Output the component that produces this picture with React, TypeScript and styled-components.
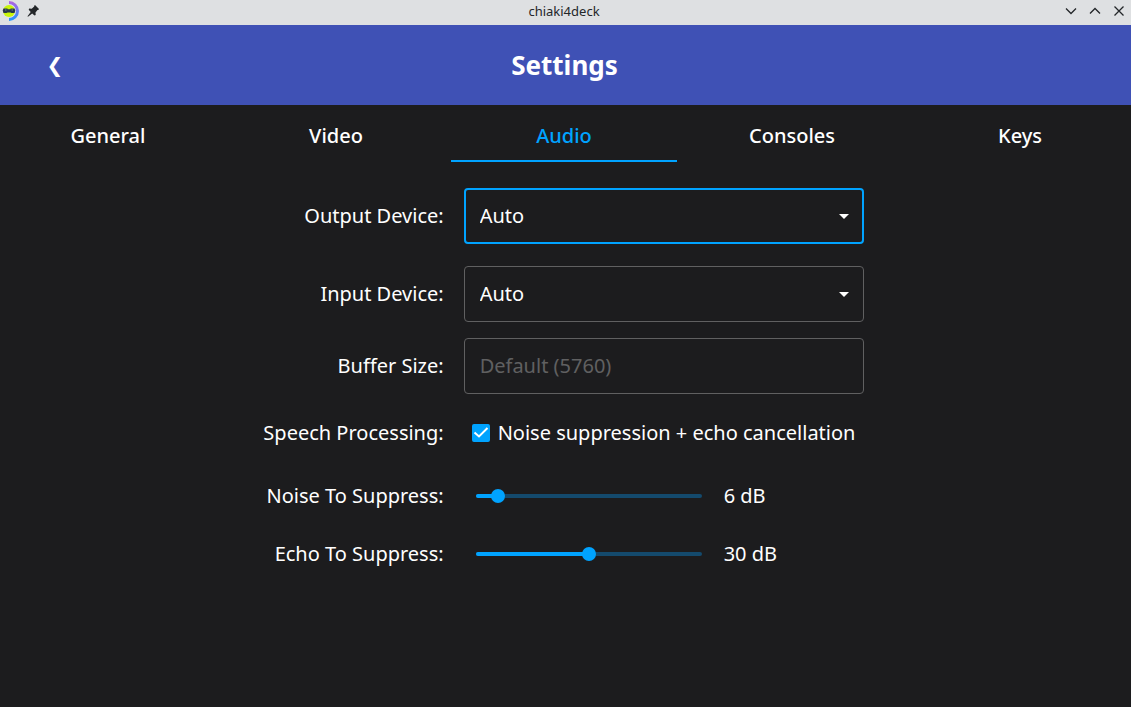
import React, { useState } from "react";
import styled, { createGlobalStyle } from "styled-components";

const accent = "#00a3ff";

const GlobalStyle = createGlobalStyle`
  * { box-sizing: border-box; }
  body {
    margin: 0;
    background: #1c1c1e;
    color: #fff;
    font-family: "Noto Sans", sans-serif;
    font-size: 20px;
    line-height: 28px;
  }
  button, input, select { font: inherit; color: inherit; margin: 0; }
`;

const Window = styled.div`
  min-height: 100vh;
  overflow: hidden;
`;

const TitleBar = styled.div`
  display: grid;
  grid-template-columns: 1fr auto 1fr;
  align-items: center;
  height: 25px;
  padding: 0 1px 3px 2px;
  background: #dee0e2;
  color: #232629;
`;

const TitleSide = styled.div<{ $end?: boolean }>`
  display: flex;
  align-items: center;
  justify-content: ${(p) => (p.$end ? "flex-end" : "flex-start")};
  gap: ${(p) => (p.$end ? "2px" : "0")};
`;

const WindowTitle = styled.span`
  font-size: 13px;
  line-height: 20px;
  padding-right: 4px;
`;

const WindowButton = styled.button`
  display: flex;
  align-items: center;
  justify-content: center;
  width: 22px;
  height: 22px;
  padding: 0;
  border: 0;
  background: none;
`;

const Header = styled.header`
  display: grid;
  grid-template-columns: 110px 1fr 112px;
  align-items: center;
  height: 80px;
  background: #3f51b5;
`;

const BackButton = styled.button`
  height: 80px;
  padding: 0;
  border: 0;
  background: none;
  font-family: "DejaVu Sans", sans-serif;
  font-size: 20px;
`;

const Heading = styled.h1`
  margin: 0;
  font-size: 26px;
  line-height: 36px;
  font-weight: 700;
  text-align: center;
`;

const Tabs = styled.nav`
  display: grid;
  grid-template-columns: repeat(5, 1fr);
  gap: 2px;
  margin: 0 -2px 0 -5px;
`;

const Tab = styled.button<{ $active: boolean }>`
  height: 57px;
  padding: 6px 0 0;
  border: 0;
  border-bottom: 2px solid ${(p) => (p.$active ? accent : "transparent")};
  background: none;
  color: ${(p) => (p.$active ? accent : "#fff")};
  font-weight: 500;
`;

const Form = styled.form`
  display: grid;
  grid-template-columns: max-content 400px;
  grid-template-rows: 68px 68px 56px 58px 48px 48px;
  gap: 10px 20px;
  align-items: center;
  justify-content: center;
  padding: 20px 4px 0 0;
`;

const Label = styled.label`
  text-align: right;
`;

const SelectBox = styled.div`
  position: relative;
  height: 56px;
`;

const Select = styled.select<{ $focused?: boolean }>`
  appearance: none;
  width: 100%;
  height: 56px;
  padding: 0 ${(p) => (p.$focused ? "14px" : "15px")};
  border: ${(p) => (p.$focused ? `2px solid ${accent}` : "1px solid #606061")};
  border-radius: 4px;
  outline: none;
  background: #1c1c1e;
`;

const Arrow = styled.svg`
  position: absolute;
  top: 26px;
  right: 15px;
  pointer-events: none;
`;

const TextField = styled.input`
  width: 100%;
  height: 56px;
  padding: 0 15px 2px;
  border: 1px solid #606061;
  border-radius: 4px;
  outline: none;
  background: transparent;
  &::placeholder { color: #606061; opacity: 1; }
`;

const CheckLabel = styled.label`
  display: flex;
  align-items: center;
  gap: 8px;
  padding-left: 8px;
  white-space: nowrap;
`;

const CheckBox = styled.span`
  display: grid;
  width: 18px;
  height: 18px;
  & > * { grid-area: 1 / 1; }
`;

const CheckInput = styled.input`
  appearance: none;
  width: 18px;
  height: 18px;
  border: 2px solid #b0b0b1;
  border-radius: 2px;
  &:checked { border-color: ${accent}; background: ${accent}; }
  & + svg { visibility: hidden; pointer-events: none; }
  &:checked + svg { visibility: visible; }
`;

const SliderRow = styled.div`
  display: flex;
  align-items: center;
  gap: 15px;
  padding-left: 5px;
`;

const Slider = styled.div`
  display: grid;
  align-items: center;
  width: 240px;
  height: 28px;
  & > * { grid-area: 1 / 1; }
`;

const Track = styled.div`
  height: 4px;
  margin: 0 7px;
  border-radius: 2px;
  overflow: hidden;
  background: #144a6d;
`;

const Fill = styled.div`
  height: 4px;
  background: ${accent};
`;

const Range = styled.input`
  appearance: none;
  position: relative;
  width: 100%;
  height: 14px;
  background: transparent;
  &::-webkit-slider-runnable-track { height: 14px; background: transparent; }
  &::-webkit-slider-thumb {
    appearance: none;
    width: 14px;
    height: 14px;
    border-radius: 50%;
    background: ${accent};
  }
`;

const AppLogo = () => (
  <svg width="20" height="20" viewBox="0 0 20 20" aria-hidden="true">
    <defs>
      <linearGradient id="ring" x1="0" y1="0" x2="0" y2="1">
        <stop offset="0" stopColor="#b562e0" />
        <stop offset="1" stopColor="#1e96ff" />
      </linearGradient>
    </defs>
    <path d="M7 0a10 10 0 0 1 0 20v-3a7 7 0 0 0 0-14z" fill="url(#ring)" />
    <circle cx="7" cy="10" r="6" fill="#c8f50a" />
    <path d="M1.500 7.500h4v.7h3v-.7h4l.8 2-.8 2.500h-3l-1-.5h-3l-1 .5h-3L.7 9.500z" fill="#27364d" />
    <path d="M3 9h1.500M9.500 9H11" stroke="#6f8288" />
  </svg>
);

const Pin = () => (
  <svg width="14" height="14" viewBox="0 0 14 14" aria-hidden="true">
    <path d="M9 1l4 4-.7.9-.8.1L9.500 8.500 9.700 11 8.500 11.500 6.200 9.500 2 12.800 1.500 12.300 4.700 8 2.700 5.700 3.200 4.600 5.700 4.700 8.200 2.600 8.200 1.700z" fill="#232629" />
  </svg>
);

const Glyph = ({ d }: { d: string }) => (
  <svg width="12" height="12" viewBox="0 0 12 12" fill="none" stroke="#232629" strokeWidth="1.300" aria-hidden="true">
    <path d={d} />
  </svg>
);

const DropArrow = () => (
  <Arrow width="10" height="5" viewBox="0 0 10 5" aria-hidden="true">
    <path d="M0 0h10L5 5z" fill="#fff" />
  </Arrow>
);

const tabNames = ["General", "Video", "Audio", "Consoles", "Keys"];

function SliderField({ id, label, initial }: { id: string; label: string; initial: number }) {
  const [value, setValue] = useState(initial);
  return (
    <>
      <Label htmlFor={id}>{label}</Label>
      <SliderRow>
        <Slider>
          <Track>
            <Fill style={{ width: `${(value / 60) * 100}%` }} />
          </Track>
          <Range id={id} type="range" min={0} max={60} value={value} onChange={(e) => setValue(Number(e.target.value))} />
        </Slider>
        <output htmlFor={id}>{value} dB</output>
      </SliderRow>
    </>
  );
}

export default function App() {
  const [active, setActive] = useState("Audio");
  return (
    <Window>
      <GlobalStyle />
      <TitleBar>
        <TitleSide>
          <AppLogo />
          <WindowButton aria-label="Pin"><Pin /></WindowButton>
        </TitleSide>
        <WindowTitle>chiaki4deck</WindowTitle>
        <TitleSide $end>
          <WindowButton aria-label="Minimize"><Glyph d="M1 3.500l5 5 5-5" /></WindowButton>
          <WindowButton aria-label="Maximize"><Glyph d="M1 8.500l5-5 5 5" /></WindowButton>
          <WindowButton aria-label="Close"><Glyph d="M1.500 1.500l9 9M10.500 1.500l-9 9" /></WindowButton>
        </TitleSide>
      </TitleBar>
      <Header>
        <BackButton aria-label="Back">❮</BackButton>
        <Heading>Settings</Heading>
      </Header>
      <Tabs>
        {tabNames.map((name) => (
          <Tab key={name} $active={name === active} onClick={() => setActive(name)}>{name}</Tab>
        ))}
      </Tabs>
      <Form>
        <Label htmlFor="output">Output Device:</Label>
        <SelectBox>
          <Select id="output" $focused><option>Auto</option></Select>
          <DropArrow />
        </SelectBox>
        <Label htmlFor="input">Input Device:</Label>
        <SelectBox>
          <Select id="input"><option>Auto</option></Select>
          <DropArrow />
        </SelectBox>
        <Label htmlFor="buffer">Buffer Size:</Label>
        <TextField id="buffer" placeholder="Default (5760)" />
        <Label htmlFor="speech">Speech Processing:</Label>
        <CheckLabel>
          <CheckBox>
            <CheckInput id="speech" type="checkbox" defaultChecked />
            <svg width="18" height="18" viewBox="0 0 18 18" fill="none" stroke="#fff" strokeWidth="2" aria-hidden="true">
              <path d="M2.500 8.500l4.500 4 8.500-8.500" />
            </svg>
          </CheckBox>
          Noise suppression + echo cancellation
        </CheckLabel>
        <SliderField id="noise" label="Noise To Suppress:" initial={6} />
        <SliderField id="echo" label="Echo To Suppress:" initial={30} />
      </Form>
    </Window>
  );
}
